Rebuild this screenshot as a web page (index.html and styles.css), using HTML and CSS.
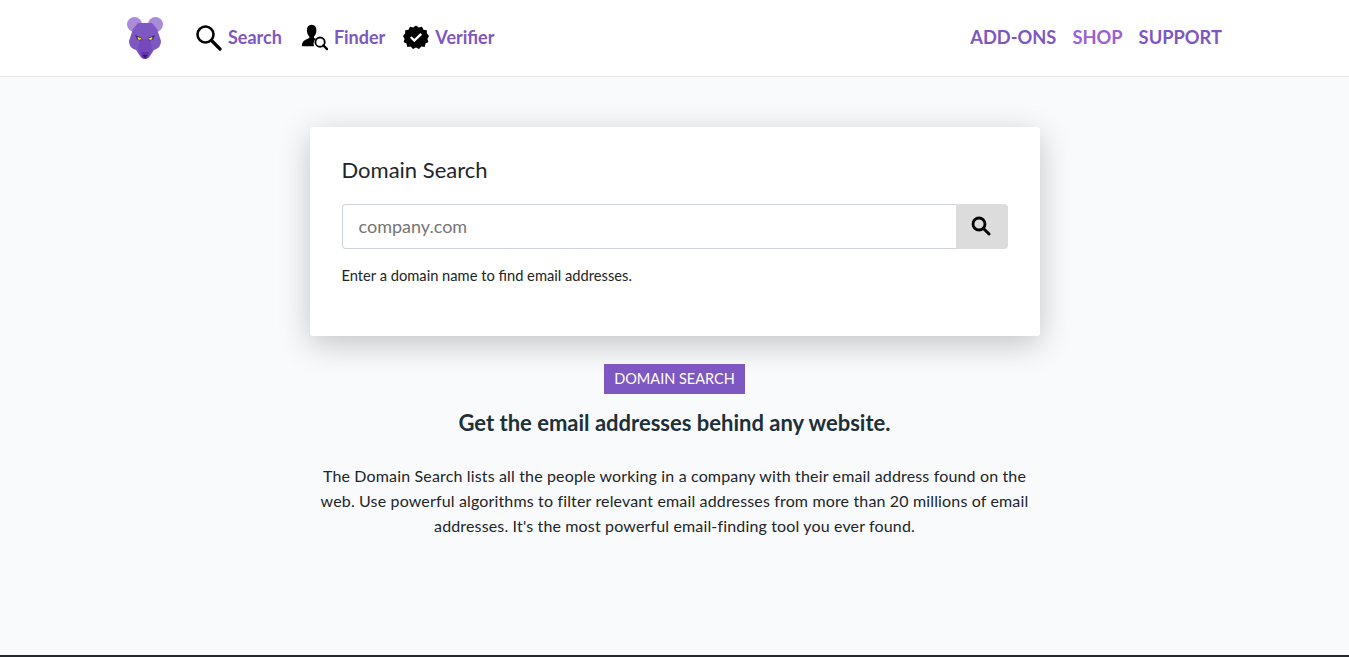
FILE: index.html
```html
<!DOCTYPE html>
<html lang="en">
<head>
  <meta charset="UTF-8" />
  <meta name="viewport" content="width=device-width, initial-scale=1.0"/>
  <title>Domain Search</title>
  <link rel="stylesheet" href="styles.css">
</head>
<body>
  <header class="navbar">
    <div class="nav-inner">
      <a class="logo" href="#">
        <svg width="36" height="42" viewBox="0 0 36 42">
          <circle cx="7.5" cy="7.5" r="7.5" fill="#a98bd9"/>
          <circle cx="28.5" cy="7.5" r="7.5" fill="#a98bd9"/>
          <path d="M11 6 H25 L30 12 L34 24 C34 30 30 32 27 33 L23 39 C21 43 15 43 13 39 L9 33 C6 32 2 30 2 24 L6 12 Z" fill="#7e57c2"/>
          <path d="M13 22 H23 L25 33 L22 39 H14 L11 33 Z" fill="#7349bb"/>
          <path d="M14 35 H22 L21 40 C19.5 42.5 16.5 42.5 15 40 Z" fill="#5e35a8"/>
          <path d="M15.5 38 H20.5 L18 41 Z" fill="#2e1a5e"/>
          <path d="M8 18 L15 21 L13.5 23.5 L10 22.5 Z" fill="#3d2a6b"/>
          <path d="M28 18 L21 21 L22.5 23.5 L26 22.5 Z" fill="#3d2a6b"/>
          <path d="M10.5 20 L14.5 21.5 L13 23 L11 22.3 Z" fill="#f0e62a"/>
          <path d="M25.5 20 L21.5 21.5 L23 23 L25 22.3 Z" fill="#f0e62a"/>
        </svg>
      </a>
      <nav class="nav-left">
        <a class="nav-link" href="#">
          <svg width="27" height="27" viewBox="0 0 27 27">
            <circle cx="10.5" cy="10.5" r="8" fill="none" stroke="#000" stroke-width="2.6"/>
            <path d="M16.5 16.5 L25 25" stroke="#000" stroke-width="3.2" stroke-linecap="round"/>
          </svg>
          Search
        </a>
        <a class="nav-link" href="#">
          <svg width="28" height="28" viewBox="-2 -1 30 30">
            <path d="M10.5 1 C14 1 16 4 15.5 8 C15.2 10.5 14 12.5 13 13.5 L13 15 L15 16 C12.5 18 12 21 13 24 H0 C0 20 1.5 18 4 17 L8 15 L8 13.5 C7 12.5 5.8 10.5 5.5 8 C5 4 7 1 10.5 1 Z" fill="#000"/>
            <circle cx="19.5" cy="19.5" r="5" fill="none" stroke="#000" stroke-width="2"/>
            <path d="M23 23 L27 27" stroke="#000" stroke-width="2.4" stroke-linecap="round"/>
          </svg>
          Finder
        </a>
        <a class="nav-link" href="#">
          <svg width="26" height="26" viewBox="0 0 26 26">
            <path d="M13 0.5 L15.8 2.6 L19 1.7 L20.5 4.7 L23.8 5.2 L23.9 8.5 L26 11 L24.4 13.9 L25.4 17.1 L22.5 18.6 L21.7 21.9 L18.4 21.6 L16 24 L13 22.6 L10 24 L7.6 21.6 L4.3 21.9 L3.5 18.6 L0.6 17.1 L1.6 13.9 L0 11 L2.1 8.5 L2.2 5.2 L5.5 4.7 L7 1.7 L10.2 2.6 Z" transform="translate(0 1)" fill="#000"/>
            <path d="M7.8 13 L11.3 16.5 L18.2 9.8" fill="none" stroke="#fff" stroke-width="2.4"/>
          </svg>
          Verifier
        </a>
      </nav>
      <nav class="nav-right">
        <a class="nav-plain" href="#">ADD-ONS</a>
        <a class="nav-plain shop" href="#">SHOP</a>
        <a class="nav-plain" href="#">SUPPORT</a>
      </nav>
    </div>
  </header>

  <main class="page">
    <section class="card">
      <h1 class="card-title">Domain Search</h1>
      <form class="search-form">
        <input class="search-input" type="text" placeholder="company.com" />
        <button class="search-btn" type="button" aria-label="Search">
          <svg width="20" height="20" viewBox="0 0 20 20">
            <circle cx="8" cy="8" r="6" fill="none" stroke="#000" stroke-width="2.8"/>
            <path d="M12.5 12.5 L18 18" stroke="#000" stroke-width="3" stroke-linecap="round"/>
          </svg>
        </button>
      </form>
      <p class="hint">Enter a domain name to find email addresses.</p>
    </section>

    <span class="badge">DOMAIN SEARCH</span>
    <h2 class="tagline">Get the email addresses behind any website.</h2>
    <p class="intro">The Domain Search lists all the people working in a company with their email address found on the web. Use powerful algorithms to filter relevant email addresses from more than 20 millions of email addresses. It's the most powerful email-finding tool you ever found.</p>
  </main>
</body>
</html>
```

FILE: styles.css
```css
html, body {
  height: 100%;
}

body {
  margin: 0;
  box-sizing: border-box;
  display: flex;
  flex-direction: column;
  overflow: hidden;
  font-family: "Lato", "Open Sans", sans-serif;
  background-color: #f9fafc;
  color: #212529;
  border-bottom: 2px solid #25282c;
}

a {
  text-decoration: none;
  color: #7e57c2;
}

.navbar {
  background-color: #fff;
  border-bottom: 1px solid #e6e6e6;
  height: 76px;
  flex-shrink: 0;
}

.nav-inner {
  height: 100%;
  display: flex;
  align-items: center;
  box-sizing: border-box;
  padding: 0 127px 2px 127px;
}

.logo {
  display: flex;
  margin-right: 32px;
  margin-top: 2px;
}

.nav-left {
  display: flex;
  align-items: center;
  gap: 18px;
}

.nav-link {
  display: flex;
  align-items: center;
  gap: 6px;
  font-size: 18px;
  font-weight: 700;
}

.nav-right {
  margin-left: auto;
  display: flex;
  gap: 16px;
}

.nav-plain {
  font-size: 18.3px;
  font-weight: 700;
}

.shop {
  color: #9b5fd6;
}

.page {
  display: flex;
  flex-direction: column;
  align-items: center;
  padding-top: 50px;
}

.card {
  width: 730px;
  height: 209px;
  box-sizing: border-box;
  padding: 29px 32px;
  background-color: #fff;
  border-radius: 3px;
  box-shadow: 0 8px 32px rgba(0, 0, 0, 0.22);
}

.card-title {
  margin: 0 0 21px;
  font-size: 22px;
  line-height: 27px;
  font-weight: 400;
}

.search-form {
  display: flex;
  height: 45px;
}

.search-input {
  flex: 1;
  box-sizing: border-box;
  border: 1px solid #ced4da;
  border-right: none;
  border-radius: 4px 0 0 4px;
  padding: 0 16px 2px;
  font-family: inherit;
  font-size: 18px;
  color: #495057;
  background-color: #fff;
}

.search-input::placeholder {
  color: #757575;
}

.search-btn {
  width: 52px;
  border: none;
  border-radius: 0 4px 4px 0;
  background-color: #dcdcdc;
  display: flex;
  align-items: center;
  justify-content: center;
  padding: 0 2px 2px 0;
}

.hint {
  margin: 16px 0 0;
  font-size: 14.7px;
  line-height: 20px;
}

.badge {
  margin-top: 28px;
  background-color: #7e57c2;
  color: #fff;
  font-size: 14.5px;
  line-height: 29px;
  padding: 0 10px 1px;
}

.tagline {
  margin: 15px 0 0;
  font-size: 22px;
  line-height: 28px;
  font-weight: 700;
  color: #1c3038;
}

.intro {
  width: 712px;
  margin: 26px 0 0;
  text-align: center;
  font-size: 16px;
  line-height: 25px;
  letter-spacing: 0.15px;
}
```
